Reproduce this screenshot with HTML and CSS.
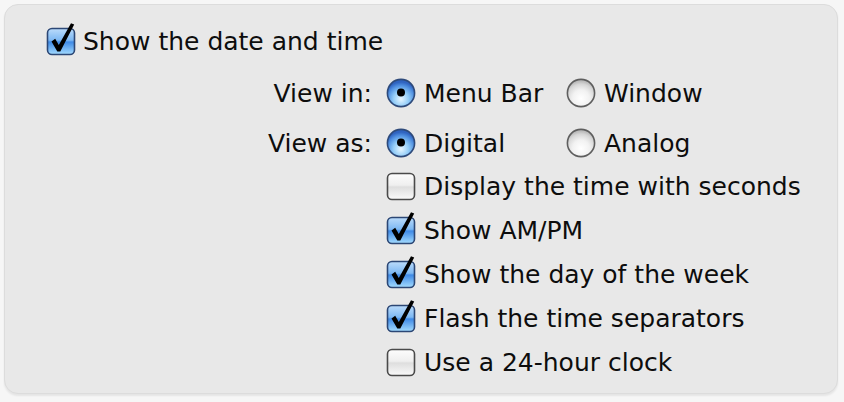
FILE: index.html
```html
<!DOCTYPE html>
<html>
<head>
<meta charset="utf-8">
<link rel="stylesheet" href="styles.css">
</head>
<body>
<svg class="defs" width="0" height="0" aria-hidden="true">
  <defs>
    <linearGradient id="gBlue" x1="0" y1="0" x2="0" y2="1">
      <stop offset="0" stop-color="#bcdcfb"/>
      <stop offset="0.45" stop-color="#7db8f3"/>
      <stop offset="0.52" stop-color="#3f8ae6"/>
      <stop offset="1" stop-color="#a4dcff"/>
    </linearGradient>
    <linearGradient id="gGray" x1="0" y1="0" x2="0" y2="1">
      <stop offset="0" stop-color="#fdfdfd"/>
      <stop offset="0.45" stop-color="#efefef"/>
      <stop offset="0.52" stop-color="#dedede"/>
      <stop offset="1" stop-color="#fafafa"/>
    </linearGradient>
    <radialGradient id="rBlue" cx="0.5" cy="0.72" r="0.62">
      <stop offset="0" stop-color="#e9f7ff"/>
      <stop offset="0.45" stop-color="#93cdf8"/>
      <stop offset="0.8" stop-color="#4f8fe0"/>
      <stop offset="1" stop-color="#2f63c0"/>
    </radialGradient>
    <radialGradient id="rGray" cx="0.5" cy="0.7" r="0.62">
      <stop offset="0" stop-color="#ffffff"/>
      <stop offset="0.5" stop-color="#f2f2f2"/>
      <stop offset="0.85" stop-color="#d6d6d6"/>
      <stop offset="1" stop-color="#bdbdbd"/>
    </radialGradient>
  </defs>
</svg>

<div class="panel">
  <div class="row title-row">
    <svg class="cb" viewBox="0 0 30 36" width="30" height="36"><rect x="1.5" y="5.5" width="27" height="26" rx="4.5" fill="url(#gBlue)" stroke="#2c4775" stroke-width="1.6"/><path d="M5.5 18.5 L9.2 15.8 L12.8 22 L25 0.2 L28.2 1.6 L14.3 28.6 L11.3 28.6 Z" fill="#000"/></svg>
    <span class="label">Show the date and time</span>
  </div>

  <div class="radio-row first">
    <span class="key">View in:</span>
    <div class="opts">
      <div class="opt">
        <svg class="rb" viewBox="0 0 30 30" width="30" height="30"><circle cx="15" cy="15" r="13.6" fill="url(#rBlue)" stroke="#2e4a7a" stroke-width="1.6"/><circle cx="15" cy="14.5" r="4" fill="#000"/></svg>
        <span class="label">Menu Bar</span>
      </div>
      <div class="opt">
        <svg class="rb" viewBox="0 0 30 30" width="30" height="30"><circle cx="15" cy="15" r="13.6" fill="url(#rGray)" stroke="#5e5e5e" stroke-width="1.6"/></svg>
        <span class="label">Window</span>
      </div>
    </div>
  </div>

  <div class="radio-row second">
    <span class="key">View as:</span>
    <div class="opts">
      <div class="opt">
        <svg class="rb" viewBox="0 0 30 30" width="30" height="30"><circle cx="15" cy="15" r="13.6" fill="url(#rBlue)" stroke="#2e4a7a" stroke-width="1.6"/><circle cx="15" cy="14.5" r="4" fill="#000"/></svg>
        <span class="label">Digital</span>
      </div>
      <div class="opt">
        <svg class="rb" viewBox="0 0 30 30" width="30" height="30"><circle cx="15" cy="15" r="13.6" fill="url(#rGray)" stroke="#5e5e5e" stroke-width="1.6"/></svg>
        <span class="label">Analog</span>
      </div>
    </div>
  </div>

  <div class="checks">
    <div class="row check-row">
      <svg class="cb" viewBox="0 0 30 36" width="30" height="36"><rect x="1.5" y="5.5" width="27" height="26" rx="4.5" fill="url(#gGray)" stroke="#4a4a4a" stroke-width="1.6"/></svg>
      <span class="label">Display the time with seconds</span>
    </div>
    <div class="row check-row">
      <svg class="cb" viewBox="0 0 30 36" width="30" height="36"><rect x="1.5" y="5.5" width="27" height="26" rx="4.5" fill="url(#gBlue)" stroke="#2c4775" stroke-width="1.6"/><path d="M5.5 18.5 L9.2 15.8 L12.8 22 L25 0.2 L28.2 1.6 L14.3 28.6 L11.3 28.6 Z" fill="#000"/></svg>
      <span class="label">Show AM/PM</span>
    </div>
    <div class="row check-row">
      <svg class="cb" viewBox="0 0 30 36" width="30" height="36"><rect x="1.5" y="5.5" width="27" height="26" rx="4.5" fill="url(#gBlue)" stroke="#2c4775" stroke-width="1.6"/><path d="M5.5 18.5 L9.2 15.8 L12.8 22 L25 0.2 L28.2 1.6 L14.3 28.6 L11.3 28.6 Z" fill="#000"/></svg>
      <span class="label">Show the day of the week</span>
    </div>
    <div class="row check-row">
      <svg class="cb" viewBox="0 0 30 36" width="30" height="36"><rect x="1.5" y="5.5" width="27" height="26" rx="4.5" fill="url(#gBlue)" stroke="#2c4775" stroke-width="1.6"/><path d="M5.5 18.5 L9.2 15.8 L12.8 22 L25 0.2 L28.2 1.6 L14.3 28.6 L11.3 28.6 Z" fill="#000"/></svg>
      <span class="label">Flash the time separators</span>
    </div>
    <div class="row check-row">
      <svg class="cb" viewBox="0 0 30 36" width="30" height="36"><rect x="1.5" y="5.5" width="27" height="26" rx="4.5" fill="url(#gGray)" stroke="#4a4a4a" stroke-width="1.6"/></svg>
      <span class="label">Use a 24-hour clock</span>
    </div>
  </div>
</div>
</body>
</html>
```

FILE: styles.css
```css
* { box-sizing: border-box; }

html, body {
  margin: 0;
  padding: 0;
}

body {
  background: #f6f6f6;
  padding: 4px 6px 8px 4px;
  font-family: "DejaVu Sans", "Liberation Sans", sans-serif;
  font-size: 25px;
  color: #0d0d0d;
}

.defs {
  position: absolute;
  width: 0;
  height: 0;
}

.panel {
  width: 834px;
  background: #e8e8e8;
  border: 1px solid #dcdcdc;
  border-radius: 14px;
  box-shadow: 0 2px 2px rgba(0, 0, 0, 0.07);
  padding: 18px 0 9px 41px;
}

.row {
  display: flex;
  align-items: center;
  gap: 7px;
}

.title-row {
  height: 36px;
}

.label {
  white-space: nowrap;
  line-height: 1;
}

.cb, .rb {
  flex: none;
  display: block;
  overflow: visible;
}

.radio-row {
  display: grid;
  grid-template-columns: 326px auto;
  column-gap: 14px;
  align-items: center;
  height: 40px;
}

.radio-row.first { margin-top: 14px; }
.radio-row.second { margin-top: 10px; }

.key {
  text-align: right;
  line-height: 1;
}

.opts {
  display: flex;
  align-items: center;
}

.opt {
  display: flex;
  align-items: center;
  gap: 8px;
}

.opt:first-child {
  width: 180px;
}

.checks {
  margin-top: 1px;
  padding-left: 340px;
  display: flex;
  flex-direction: column;
}

.check-row {
  height: 44px;
  gap: 8px;
}
```
